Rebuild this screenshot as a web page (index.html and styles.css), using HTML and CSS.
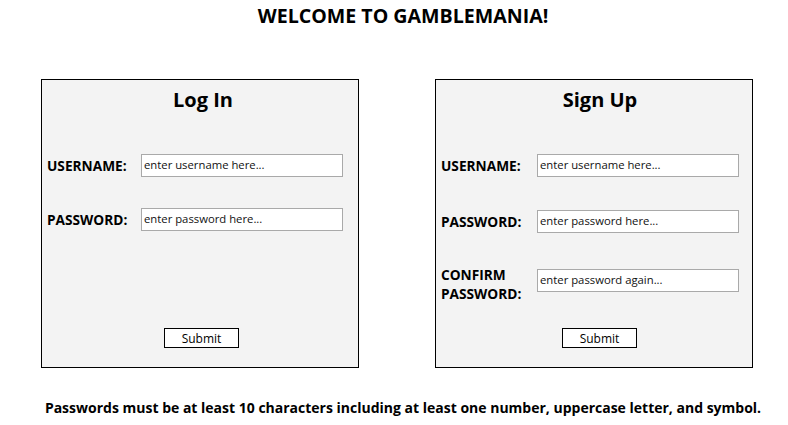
FILE: index.html
```html
<!DOCTYPE html>
<html lang="en">
<head>
<meta charset="utf-8">
<title>Gamblemania</title>
<link rel="stylesheet" href="styles.css">
</head>
<body>
<div class="page">
  <h1 class="title">WELCOME TO GAMBLEMANIA!</h1>
  <div class="panels">
    <form class="panel panel-login">
      <h2 class="panel-title">Log In</h2>
      <div class="row row-user">
        <label class="label" for="lu">USERNAME:</label>
        <input class="field" id="lu" type="text" placeholder="enter username here...">
      </div>
      <div class="row row-pass">
        <label class="label" for="lp">PASSWORD:</label>
        <input class="field" id="lp" type="password" placeholder="enter password here...">
      </div>
      <div class="actions"><button class="submit" type="button">Submit</button></div>
    </form>
    <form class="panel panel-signup">
      <h2 class="panel-title">Sign Up</h2>
      <div class="row row-user">
        <label class="label" for="su">USERNAME:</label>
        <input class="field" id="su" type="text" placeholder="enter username here...">
      </div>
      <div class="row row-pass">
        <label class="label" for="sp">PASSWORD:</label>
        <input class="field" id="sp" type="password" placeholder="enter password here...">
      </div>
      <div class="row row-confirm">
        <label class="label" for="sc">CONFIRM<br>PASSWORD:</label>
        <input class="field" id="sc" type="password" placeholder="enter password again...">
      </div>
      <div class="actions"><button class="submit" type="button">Submit</button></div>
    </form>
  </div>
  <p class="note">Passwords must be at least 10 characters including at least one number, uppercase letter, and symbol.</p>
</div>
</body>
</html>
```

FILE: styles.css
```css
* { box-sizing: border-box; }
html, body { margin: 0; padding: 0; background: #fff; }
body {
  font-family: "Open Sans", "Noto Sans", sans-serif;
  color: #000;
}
.page {
  padding-left: 18px;
}
.title {
  margin: 3px 0 0;
  font-size: 19.6px;
  line-height: 26px;
  font-weight: 700;
  text-align: center;
}
.panels {
  display: flex;
  gap: 76px;
  margin-top: 50px;
  padding-left: 23px;
}
.panel {
  width: 318px;
  height: 289px;
  border: 1px solid #000;
  background: #f3f3f3;
  padding: 0 5px;
  display: flex;
  flex-direction: column;
}
.panel-title {
  margin: 6px 0 0;
  padding-left: 6px;
  font-size: 20px;
  line-height: 28px;
  font-weight: 700;
  text-align: center;
}
.panel-signup .panel-title { padding-left: 12px; }
.row {
  display: grid;
  grid-template-columns: 94px 202px;
  align-items: center;
}
.panel-signup .row { grid-template-columns: 96px 202px; }
.label {
  font-size: 13.7px;
  font-weight: 700;
  line-height: 19.5px;
}
.field {
  width: 202px;
  height: 23px;
  margin: 0;
  border: 1px solid #a9a9a9;
  background: #fff;
  padding: 0 2px 3px;
  font-family: inherit;
  font-size: 11.3px;
  color: #000;
}
.field::placeholder { color: #111; opacity: 1; }
.row-user { margin-top: 40px; }
.panel-login .row-pass { margin-top: 31px; }
.panel-signup .row-pass { margin-top: 33px; }
.row-confirm { margin-top: 31.5px; align-items: start; }
.row-confirm .field { margin-top: 4.5px; }
.actions {
  display: flex;
  justify-content: center;
  margin-top: auto;
  margin-bottom: 19px;
  padding-left: 3px;
}
.panel-signup .actions { padding-left: 11px; }
.submit {
  width: 75px;
  height: 20px;
  margin: 0;
  padding: 0;
  border: 1px solid #000;
  background: #fff;
  font-family: inherit;
  font-size: 12px;
  color: #000;
}
.note {
  margin: 30px 0 0;
  font-size: 14px;
  font-weight: 700;
  text-align: center;
}
```
